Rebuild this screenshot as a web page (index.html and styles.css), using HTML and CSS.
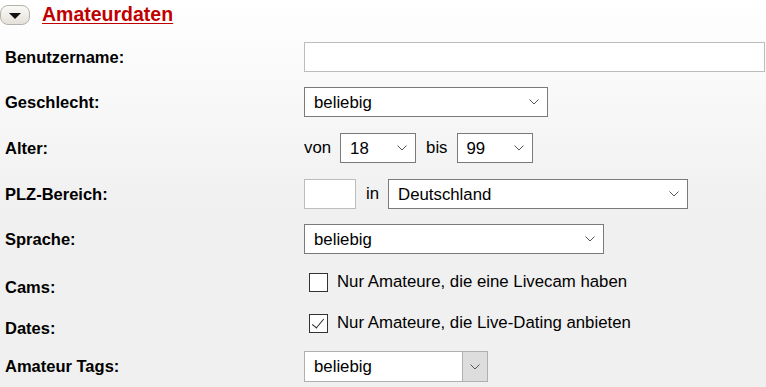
FILE: index.html
```html
<!DOCTYPE html>
<html lang="de">
<head>
  <meta charset="UTF-8">
  <title>Amateurdaten</title>
  <link rel="stylesheet" href="styles.css">
</head>
<body>
  <div class="section-head">
    <button class="toggle" type="button"><span class="triangle"></span></button>
    <a class="section-title" href="#">Amateurdaten</a>
  </div>

  <form class="search-form">
    <div class="row">
      <label class="field-label">Benutzername:</label>
      <input class="text-input username" type="text">
    </div>

    <div class="row">
      <label class="field-label">Geschlecht:</label>
      <span class="select-wrap w-gender">
        <select class="select"><option>beliebig</option></select>
        <svg class="chevron" width="10" height="6" viewBox="0 0 10 6"><polyline points="0.5,0.5 5,5 9.5,0.5" fill="none" stroke="#555" stroke-width="1"/></svg>
      </span>
    </div>

    <div class="row row-age">
      <label class="field-label">Alter:</label>
      <span class="inline-text">von</span>
      <span class="select-wrap w-age">
        <select class="select"><option>18</option></select>
        <svg class="chevron" width="10" height="6" viewBox="0 0 10 6"><polyline points="0.5,0.5 5,5 9.5,0.5" fill="none" stroke="#555" stroke-width="1"/></svg>
      </span>
      <span class="inline-text">bis</span>
      <span class="select-wrap w-age">
        <select class="select"><option>99</option></select>
        <svg class="chevron" width="10" height="6" viewBox="0 0 10 6"><polyline points="0.5,0.5 5,5 9.5,0.5" fill="none" stroke="#555" stroke-width="1"/></svg>
      </span>
    </div>

    <div class="row">
      <label class="field-label">PLZ-Bereich:</label>
      <input class="text-input zip" type="text">
      <span class="inline-text">in</span>
      <span class="select-wrap w-country">
        <select class="select"><option>Deutschland</option></select>
        <svg class="chevron" width="10" height="6" viewBox="0 0 10 6"><polyline points="0.5,0.5 5,5 9.5,0.5" fill="none" stroke="#555" stroke-width="1"/></svg>
      </span>
    </div>

    <div class="row">
      <label class="field-label">Sprache:</label>
      <span class="select-wrap w-lang">
        <select class="select"><option>beliebig</option></select>
        <svg class="chevron" width="10" height="6" viewBox="0 0 10 6"><polyline points="0.5,0.5 5,5 9.5,0.5" fill="none" stroke="#555" stroke-width="1"/></svg>
      </span>
    </div>

    <div class="row row-check">
      <label class="field-label">Cams:</label>
      <label class="check-label"><input class="check" type="checkbox"> Nur Amateure, die eine Livecam haben</label>
    </div>

    <div class="row row-check">
      <label class="field-label">Dates:</label>
      <label class="check-label"><input class="check" type="checkbox" checked> Nur Amateure, die Live-Dating anbieten</label>
    </div>

    <div class="row row-tags">
      <label class="field-label">Amateur Tags:</label>
      <span class="select-wrap w-tags">
        <select class="select select-tags"><option>beliebig</option></select>
        <span class="tags-button">
          <svg width="10" height="6" viewBox="0 0 10 6"><polyline points="0.5,0.5 5,5 9.5,0.5" fill="none" stroke="#555" stroke-width="1"/></svg>
        </span>
      </span>
    </div>
  </form>
</body>
</html>
```

FILE: styles.css
```css
* {
  box-sizing: border-box;
}
body {
  margin: 0;
  font-family: "Liberation Sans", Arial, sans-serif;
  color: #000;
  background: linear-gradient(180deg, #ffffff 0px, #f0f0f0 210px, #f0f0f0 100%);
  min-height: 387px;
}
.section-head {
  display: flex;
  align-items: center;
  gap: 12px;
  height: 28px;
  padding-top: 1px;
}
.toggle {
  width: 30px;
  height: 20px;
  padding: 0;
  border: 1px solid #b5b2aa;
  border-radius: 8px;
  background: linear-gradient(180deg, #fbfaf7, #e4e1da);
  display: flex;
  align-items: center;
  justify-content: center;
}
.triangle {
  width: 0;
  height: 0;
  border-left: 6px solid transparent;
  border-right: 6px solid transparent;
  border-top: 6px solid #111;
  margin-top: 2px;
}
.section-title {
  color: #c00000;
  font-weight: bold;
  font-size: 19.5px;
  text-decoration: underline;
  text-underline-offset: 2px;
}
.search-form {
  padding: 14px 0 0 5px;
  display: flex;
  flex-direction: column;
  gap: 15px;
}
.row {
  display: flex;
  align-items: center;
  height: 30px;
}
.row-age {
  height: 32px;
  gap: 9px;
}
.row-age .field-label {
  margin-right: -9px;
}
.row-check {
  height: 26px;
}
.row-check .field-label {
  padding-top: 10px;
}
.row-tags {
  height: 31px;
}
.field-label {
  flex: 0 0 299px;
  font-weight: bold;
  font-size: 16.5px;
}
.inline-text {
  font-size: 16.8px;
  margin: 0 9px 0 10px;
}
.row-age .inline-text {
  margin: 0;
}
.row-age .inline-text + .select-wrap {
  margin-right: 1px;
}
.text-input {
  height: 30px;
  border: 1px solid #bcbcbc;
  background: #fff;
  font-size: 16.8px;
  padding: 0 8px;
}
.username {
  width: 461px;
}
.zip {
  width: 52px;
}
.select-wrap {
  position: relative;
  display: inline-block;
  height: 30px;
}
.select {
  appearance: none;
  width: 100%;
  height: 100%;
  border: 1px solid #7a7a7a;
  border-radius: 0;
  background: #fff;
  color: #000;
  font-family: inherit;
  font-size: 16.8px;
  padding: 0 0 0 9px;
}
.chevron {
  position: absolute;
  right: 9px;
  top: 12px;
  pointer-events: none;
}
.w-gender {
  width: 244px;
}
.w-age {
  width: 76px;
}
.w-country {
  width: 300px;
}
.w-lang {
  width: 300px;
}
.w-tags {
  width: 184px;
  height: 31px;
}
.select-tags {
  border-color: #b0b0b0;
}
.tags-button {
  position: absolute;
  right: 1px;
  top: 1px;
  bottom: 1px;
  width: 25px;
  background: #dddddd;
  border-left: 1px solid #b0b0b0;
  display: flex;
  align-items: center;
  justify-content: center;
  pointer-events: none;
}
.check-label {
  display: flex;
  align-items: center;
  gap: 9px;
  font-size: 16.8px;
  margin-left: 5px;
}
.check {
  appearance: none;
  width: 19px;
  height: 19px;
  margin: 0;
  border: 1px solid #333;
  background: #fff;
  position: relative;
}
.check:checked::after {
  content: "";
  position: absolute;
  left: 5px;
  top: 1px;
  width: 5px;
  height: 11px;
  border-right: 1.5px solid #222;
  border-bottom: 1.5px solid #222;
  transform: rotate(40deg);
}
```
